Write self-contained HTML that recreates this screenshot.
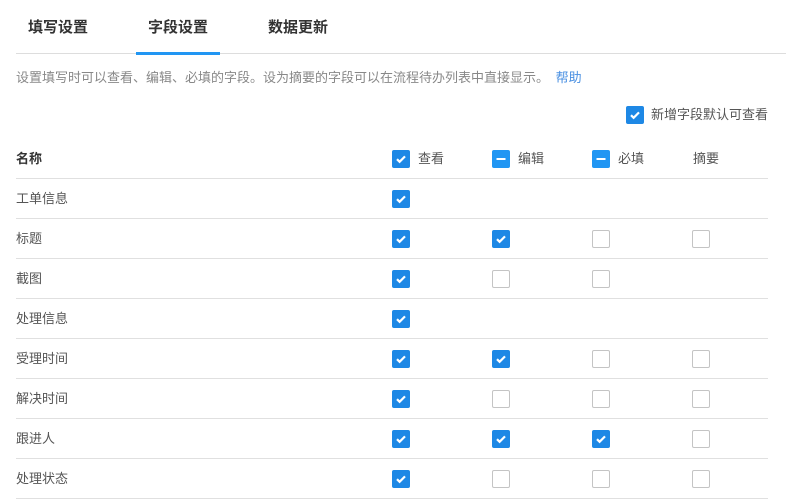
<!DOCTYPE html>
<html><head><meta charset="utf-8"><style>
body{margin:0;width:786px;height:501px;background:#fff;position:relative;overflow:hidden;font-family:"Liberation Sans","Noto Sans CJK SC",sans-serif;}
.a{position:absolute;white-space:nowrap}
.tab{font-size:15px;font-weight:bold;color:#333;top:18px;line-height:20px}
.line{position:absolute;left:16px;width:752px;height:1px;background:#e0e0e0}
.cb{position:absolute;width:18px;height:18px;box-sizing:border-box;border-radius:2px}
.on{background:#1e88e5}
.ind{background:#2196f3}
.off{border:1px solid #c4c4c4;background:#fff}
.lbl{font-size:13px;color:#555;line-height:18px}
</style></head><body>
<div class="a tab" style="left:28px">填写设置</div>
<div class="a tab" style="left:148px">字段设置</div>
<div class="a tab" style="left:268px">数据更新</div>
<div style="position:absolute;left:16px;top:53px;width:770px;height:1px;background:#ddd"></div>
<div style="position:absolute;left:136px;top:52px;width:84px;height:3px;background:#2196f3"></div>
<div class="a" style="left:16px;top:69px;font-size:13px;color:#888;line-height:18px">设置填写时可以查看、编辑、必填的字段。设为摘要的字段可以在流程待办列表中直接显示。 <span style="color:#4a90e2;margin-left:3px">帮助</span></div>
<div id="c"></div>
<div class="a lbl" style="left:651px;top:106px">新增字段默认可查看</div>
<div class="a" style="left:16px;top:150px;font-size:13px;font-weight:bold;color:#333;line-height:18px">名称</div>
<div class="a lbl" style="left:418px;top:150px">查看</div>
<div class="a lbl" style="left:518px;top:150px">编辑</div>
<div class="a lbl" style="left:618px;top:150px">必填</div>
<div class="a lbl" style="left:693px;top:150px">摘要</div>
<script>
var chk='<svg width="18" height="18" viewBox="0 0 18 18"><path d="M5 9.2l2.6 2.6L13 6.4" fill="none" stroke="#fff" stroke-width="2.2"/></svg>';
var dash='<svg width="18" height="18" viewBox="0 0 18 18"><rect x="4.5" y="8" width="9" height="2" fill="#fff"/></svg>';
function cb(x,y,t){var c=t==1?'on':t==2?'ind':'off';return '<div class="cb '+c+'" style="left:'+x+'px;top:'+y+'px">'+(t==1?chk:t==2?dash:'')+'</div>';}
var h='';
h+=cb(626,106,1);
h+=cb(392,150,1)+cb(492,150,2)+cb(592,150,2);
var rows=[["工单信息",[1,-1,-1,-1]],["标题",[1,1,0,0]],["截图",[1,0,0,-1]],["处理信息",[1,-1,-1,-1]],["受理时间",[1,1,0,0]],["解决时间",[1,0,0,0]],["跟进人",[1,1,1,0]],["处理状态",[1,0,0,0]]];
h+='<div class="line" style="top:178px"></div>';
rows.forEach(function(r,i){var y=190+i*40;
h+='<div class="a lbl" style="left:16px;top:'+y+'px">'+r[0]+'</div>';
r[1].forEach(function(v,j){if(v>=0)h+=cb(392+j*100,y,v);});
h+='<div class="line" style="top:'+(218+i*40)+'px"></div>';});
document.getElementById('c').innerHTML=h;
</script>
</body></html>
